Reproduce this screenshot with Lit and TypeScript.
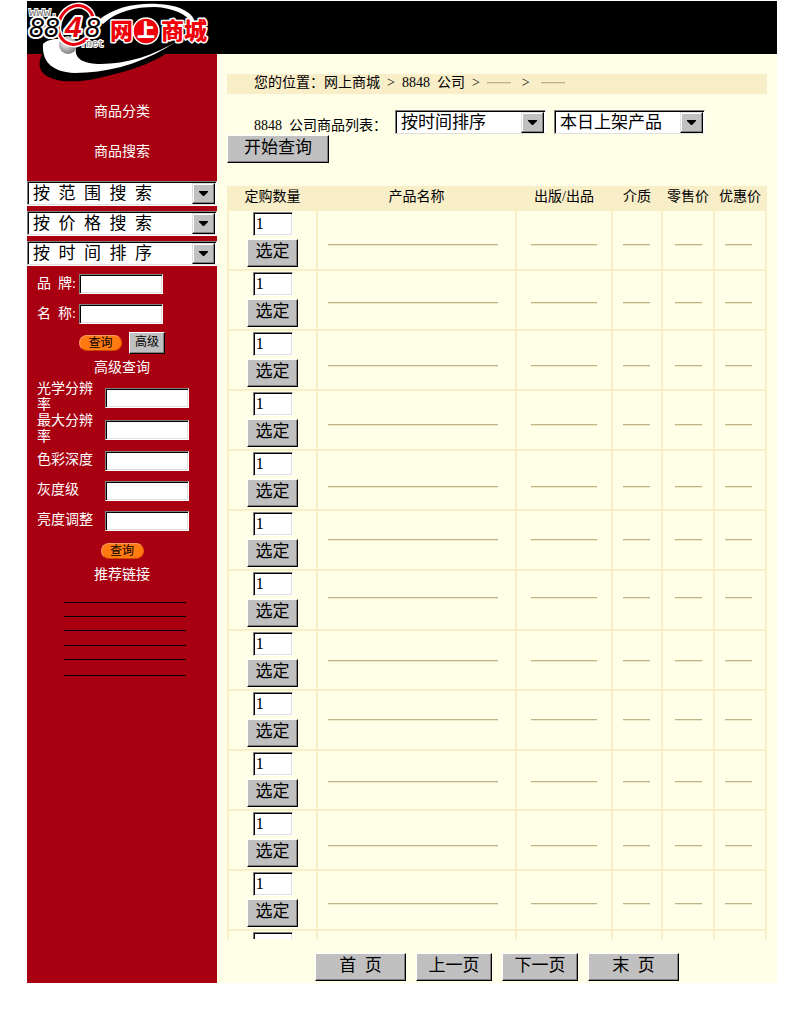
import { LitElement, html, css, svg, nothing } from "lit";
import { customElement, property } from "lit/decorators.js";

const shared = css`
  * {
    box-sizing: border-box;
  }
  input,
  select,
  button {
    margin: 0;
    border-radius: 0;
    font-family: inherit;
    font-weight: inherit;
    color: #000;
  }
  .field {
    display: block;
    width: 84px;
    height: 20px;
    padding: 0 2px;
    font-size: 14px;
    background: #fff;
    border: 1px solid;
    border-color: #808080 #fff #fff #808080;
    box-shadow: inset 1px 1px #000, inset -1px -1px #dfdfdf;
    outline: none;
  }
  .btn {
    display: flex;
    align-items: center;
    justify-content: center;
    height: 28px;
    padding: 0 0 2px;
    font-size: 17px;
    line-height: 20px;
    background: #c0c0c0;
    border: 1px solid;
    border-color: #fff #000 #000 #fff;
    box-shadow: inset -1px -1px #808080;
    white-space: nowrap;
  }
`;

/** Drop-down with a bevelled frame and arrow. */
@customElement("bevel-select")
export class BevelSelect extends LitElement {
  @property() value = "";
  @property() name = "";

  static styles = [
    shared,
    css`
      :host {
        display: block;
      }
      .frame {
        display: grid;
        height: 24px;
        background: #fff;
        border: 1px solid;
        border-color: #808080 #fff #dfdfdf #808080;
        box-shadow: inset 1px 1px #000;
        padding: 1px;
      }
      .control {
        grid-area: 1 / 1;
        min-width: 0;
        height: 21px;
        width: 100%;
        appearance: none;
        border: none;
        outline: none;
        background: transparent;
        font-size: 17px;
        line-height: 20px;
        padding: 1px 0 0 4px;
      }
      .arrow {
        grid-area: 1 / 1;
        justify-self: end;
        display: grid;
        place-items: center;
        width: 23px;
        height: 21px;
        background: #c0c0c0;
        border: 1px solid;
        border-color: #dfdfdf #000 #000 #dfdfdf;
        box-shadow: inset -1px -1px #808080, inset 1px 1px #fff;
        pointer-events: none;
      }
    `,
  ];

  render() {
    return html`<div class="frame">
      <select class="control" name=${this.name} aria-label=${this.name}>
        <option>${this.value}</option>
      </select>
      <span class="arrow">
        <svg width="9" height="5" viewBox="0 0 9 5"><path d="M0 0h9v1L5 5H4L0 1z" /></svg>
      </span>
    </div>`;
  }
}

/** Brand mark: ringed 8848.net with a swoosh. */
@customElement("mall-logo")
export class MallLogo extends LitElement {
  static styles = css`
    :host {
      display: block;
    }
    .art {
      display: block;
    }
    .num {
      font: italic 400 27px "Liberation Sans", sans-serif;
      paint-order: stroke;
      stroke: #fff;
      stroke-width: 4px;
      stroke-linejoin: round;
    }
    .bold {
      font-weight: 700;
      fill: #e8000c;
      font-size: 30px;
    }
    .small {
      font: 10px "Liberation Mono", monospace;
      fill: #777;
      paint-order: stroke;
      stroke: #fff;
      stroke-width: 2px;
    }
    .www {
      font-size: 12px;
    }
    .cn {
      font: 900 23px "Noto Sans CJK SC", sans-serif;
      fill: #f00008;
      paint-order: stroke;
      stroke: #fff;
      stroke-width: 3px;
      stroke-linejoin: round;
    }
    .inner {
      font-size: 18px;
      fill: #fff;
      stroke: none;
    }
  `;

  render() {
    return html`<svg class="art" width="190" height="82" viewBox="0 0 190 82" role="img" aria-label="8848.net">
      ${svg`
        <defs>
          <radialGradient id="ball" cx="0.4" cy="0.35" r="0.7">
            <stop offset="0" stop-color="#fff" />
            <stop offset="1" stop-color="#777" />
          </radialGradient>
        </defs>
        <path d="M17 50C11 59 11 67 17 73C27 82 50 82 72 77C102 70 124 63 140 52Z" fill="#000" />
        <path d="M16 43C15 58 22 71 48 72C78 72 110 64 139 47L154 38C126 55 99 63 74 63C57 63 47 58 49 47C50 40 26 33 16 43Z" fill="#fff" />
        <path d="M71 20C86 6 110 2 130 3C156 4 170 14 168 26L164 22C160 13 146 7 128 6C108 6 90 10 76 23Z" fill="#fff" />
        <circle cx="41" cy="44" r="9" fill="url(#ball)" />
        <text class="small www" x="2" y="15">www.</text>
        <ellipse cx="49" cy="24" rx="17" ry="20" fill="none" stroke="#fff" stroke-width="6" transform="rotate(28 49 24)" />
        <ellipse cx="49" cy="24" rx="17" ry="20" fill="none" stroke="#e8000c" stroke-width="3" transform="rotate(28 49 24)" />
        <text class="num" x="2" y="36">88</text>
        <text class="num" x="58" y="36">8</text>
        <text class="num bold" x="38" y="36">4</text>
        <text class="small" x="53" y="46">.net</text>
        <text class="cn" x="83" y="38">网</text>
        <text class="cn" x="134" y="38">商城</text>
        <circle cx="119" cy="30" r="13" fill="#f00008" stroke="#fff" stroke-width="1.5" />
        <text class="cn inner" x="110" y="36">上</text>
      `}
    </svg>`;
  }
}

/** Left column: category headings, filters and the advanced search form. */
@customElement("search-panel")
export class SearchPanel extends LitElement {
  private filters = ["按 范 围 搜 索", "按 价 格 搜 索", "按 时 间 排 序"];
  private basics = ["品 牌:", "名 称:"];
  private details = ["光学分辨率", "最大分辨率", "色彩深度", "灰度级", "亮度调整"];
  private links = [14, 14, 14, 15, 14, 16];

  static styles = [
    shared,
    css`
      :host {
        display: block;
        background: #a80010;
        color: #fff;
        padding-top: 50px;
        font-size: 14px;
        line-height: 16px;
      }
      .title {
        margin: 0 0 24px;
        font-size: 14px;
        line-height: 16px;
        font-weight: inherit;
        text-align: center;
      }
      .filters {
        display: grid;
        gap: 5px;
        margin-top: -3px;
        margin-bottom: 8px;
      }
      .filter {
        background: #fff;
        padding-bottom: 1px;
      }
      .basic {
        display: flex;
        padding-left: 10px;
        margin-bottom: 10px;
      }
      .basic-label {
        width: 42px;
        padding-top: 2px;
        white-space: nowrap;
      }
      .actions {
        display: flex;
        align-items: center;
        gap: 7px;
        margin-top: -2px;
        padding-left: 52px;
      }
      .pill {
        width: 43px;
        height: 16px;
        padding: 0;
        border: 1px solid;
        border-color: #ff9a60 #f06000 #d04800 #ff9a60;
        border-radius: 8px;
        background: #ff7a10;
        font-size: 12px;
        line-height: 12px;
      }
      .btn.mini {
        width: 36px;
        height: 22px;
        font-size: 12px;
      }
      .sub {
        margin: 6px 0;
      }
      .detail {
        display: grid;
        grid-template-columns: 56px 84px;
        column-gap: 12px;
        align-items: center;
        min-height: 30px;
        padding-left: 10px;
      }
      .detail-label {
        margin: -1px 0 1px;
      }
      .center {
        display: flex;
        justify-content: center;
        margin: 7px 0 8px;
      }
      .links {
        width: 122px;
        margin: 0 auto 0 37px;
      }
      .link {
        display: flex;
        align-items: flex-end;
      }
      .rule {
        width: 100%;
        height: 1px;
        background: #000;
      }
    `,
  ];

  render() {
    return html`
      <h2 class="title">商品分类</h2>
      <h2 class="title">商品搜索</h2>
      <div class="filters">
        ${this.filters.map(
          (f) => html`<div class="filter"><bevel-select .name=${f} .value=${f.replaceAll(" ", "\u2002")}></bevel-select></div>`
        )}
      </div>
      ${this.basics.map(
        (b, i) => html`<div class="basic">
          <label class="basic-label" for="basic${i}">${b.replaceAll(" ", "\u2002")}</label>
          <input class="field" id="basic${i}" type="text" />
        </div>`
      )}
      <div class="actions">
        <button class="pill">查询</button>
        <button class="btn mini">高级</button>
      </div>
      <h3 class="title sub">高级查询</h3>
      ${this.details.map(
        (d, i) => html`<div class="detail">
          <label class="detail-label" for="detail${i}">${d}</label>
          <input class="field" id="detail${i}" type="text" />
        </div>`
      )}
      <div class="center"><button class="pill">查询</button></div>
      <h3 class="title sub">推荐链接</h3>
      <div class="links">
        ${this.links.map((h) => html`<div class="link" style="height:${h}px"><span class="rule"></span></div>`)}
      </div>
    `;
  }
}

/** Product list with an order quantity per row. */
@customElement("product-table")
export class ProductTable extends LitElement {
  private heads = ["定购数量", "产品名称", "出版/出品", "介质", "零售价", "优惠价"];
  private rows = [33, 31, 34, 33, 35, 28, 26, 29, 28, 30, 34, 32];

  static styles = [
    shared,
    css`
      :host {
        display: block;
        height: 753px;
        overflow: hidden;
      }
      .table {
        width: 100%;
        table-layout: fixed;
        border-collapse: separate;
        border-spacing: 2px;
        background: #f8eec8;
        font-size: 14px;
        line-height: 16px;
      }
      .head {
        height: 21px;
        padding: 0 0 3px;
        font-weight: inherit;
        white-space: nowrap;
      }
      .cell {
        height: 58px;
        padding: 0;
        vertical-align: top;
        background: #ffffe8;
      }
      .c0 {
        width: 87px;
      }
      .c2 {
        width: 94px;
      }
      .c3 {
        width: 48px;
      }
      .c4,
      .c5 {
        width: 50px;
      }
      .order {
        display: flex;
        flex-direction: column;
        align-items: center;
        gap: 3px;
        padding-top: 1px;
      }
      .field.qty {
        width: 40px;
        height: 24px;
        font-size: 17px;
      }
      .pick {
        width: 51px;
      }
      .rule {
        height: 2px;
        margin: 0 10px;
        width: 27px;
        background: #bcb388;
        border-bottom: 1px solid #efe9c5;
      }
      .rule.r1 {
        width: auto;
        margin-right: 17px;
      }
      .rule.r2 {
        width: auto;
        margin: 0 14px;
      }
      .rule.r4 {
        margin-left: 12px;
      }
    `,
  ];

  render() {
    return html`<table class="table">
      <thead>
        <tr>
          ${this.heads.map((h, i) => html`<th class="head c${i}" scope="col">${h}</th>`)}
        </tr>
      </thead>
      <tbody>
        ${this.rows.map(
          (y) => html`<tr>
            <td class="cell">
              <div class="order">
                <input class="field qty" type="text" value="1" aria-label="定购数量" />
                <button class="btn pick">选定</button>
              </div>
            </td>
            ${[1, 2, 3, 4, 5].map(
              (c) => html`<td class="cell" style="padding-top:${y}px"><div class="rule r${c}"></div></td>`
            )}
          </tr>`
        )}
        <tr>
          ${[0, 1, 2, 3, 4, 5].map(
            (c) => html`<td class="cell">
              ${c === 0
                ? html`<div class="order"><input class="field qty" type="text" aria-label="定购数量" /></div>`
                : nothing}
            </td>`
          )}
        </tr>
      </tbody>
    </table>`;
  }
}

@customElement("app-root")
export class AppRoot extends LitElement {
  static styles = [
    shared,
    css`
      :host {
        display: block;
        padding: 1px 23px 38px 27px;
        background: #fff;
        color: #000;
        font-family: "Liberation Serif", "Noto Sans CJK SC", sans-serif;
        font-weight: 400;
        font-size: 14px;
        line-height: 16px;
      }
      .top {
        position: relative;
        height: 53px;
        background: #000;
      }
      .logo {
        position: absolute;
        left: 0;
        top: 0;
        z-index: 1;
      }
      .body {
        display: grid;
        grid-template-columns: 190px minmax(0, 1fr);
      }
      .main {
        padding: 20px 10px 2px;
        background: #ffffe8;
      }
      .crumbs {
        display: flex;
        align-items: center;
        gap: 7px;
        height: 20px;
        padding: 0 0 2px 27px;
        background: #f8eec8;
      }
      .crumb {
        color: inherit;
        text-decoration: none;
        white-space: nowrap;
      }
      .blank {
        width: 24px;
        height: 2px;
        background: #bcb388;
        border-bottom: 1px solid #e4dab0;
      }
      .gap {
        margin: 0 4px;
      }
      .query {
        display: flex;
        gap: 8px;
        margin: 16px 0 1px;
        padding-left: 27px;
      }
      .caption {
        padding-top: 8px;
        white-space: nowrap;
      }
      .sort {
        width: 151px;
      }
      .go {
        width: 102px;
        margin-bottom: 23px;
      }
      .pager {
        display: flex;
        justify-content: center;
        gap: 10px;
        margin-top: 14px;
      }
      .edge {
        width: 91px;
      }
      .step {
        width: 76px;
      }
    `,
  ];

  render() {
    return html`
      <header class="top"><mall-logo class="logo"></mall-logo></header>
      <div class="body">
        <search-panel></search-panel>
        <main class="main">
          <nav class="crumbs">
            <span class="crumb">您的位置：<a class="crumb" href="#">网上商城</a></span>
            <span>&gt;</span>
            <a class="crumb" href="#">8848&ensp;公司</a>
            <span>&gt;</span>
            <span class="blank"></span>
            <span class="gap">&gt;</span>
            <span class="blank"></span>
          </nav>
          <div class="query">
            <span class="caption">8848&ensp;公司商品列表：</span>
            <bevel-select class="sort" name="排序" value="按时间排序"></bevel-select>
            <bevel-select class="sort" name="产品" value="本日上架产品"></bevel-select>
          </div>
          <button class="btn go">开始查询</button>
          <product-table></product-table>
          <nav class="pager">
            <button class="btn edge">首&ensp;页</button>
            <button class="btn step">上一页</button>
            <button class="btn step">下一页</button>
            <button class="btn edge">末&ensp;页</button>
          </nav>
        </main>
      </div>
    `;
  }
}
